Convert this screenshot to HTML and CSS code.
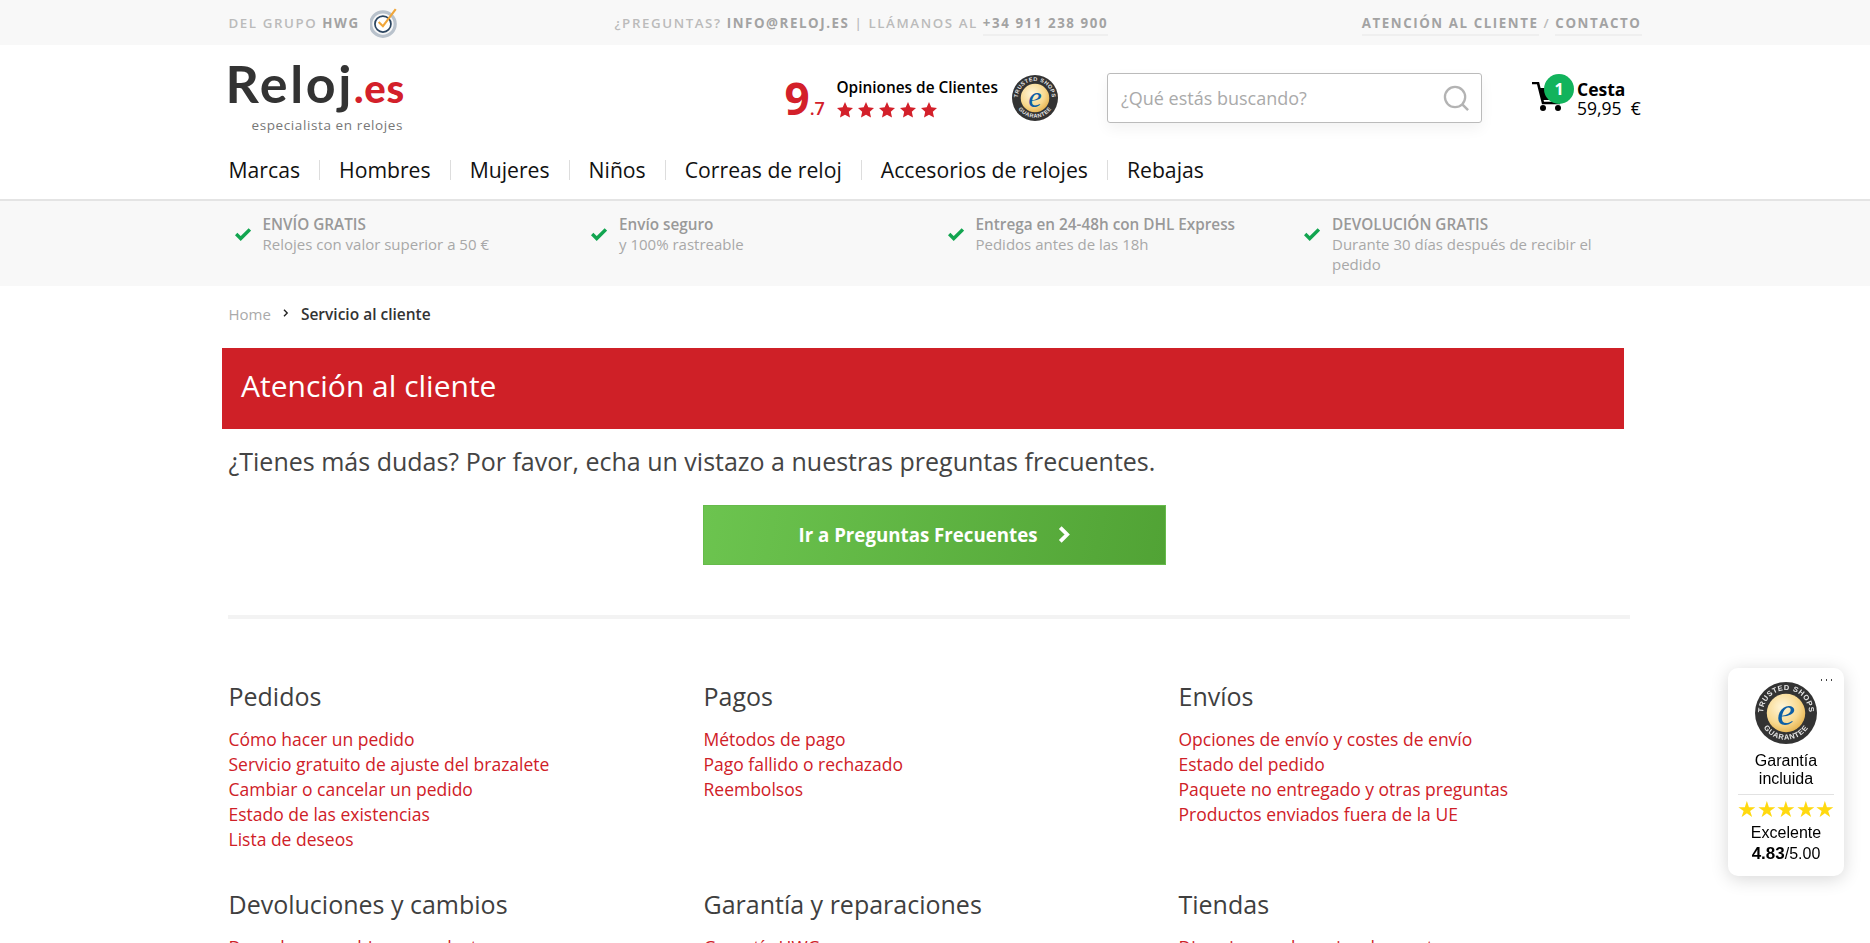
FILE: index.html
```html
<!DOCTYPE html>
<html lang="es">
<head>
  <meta charset="UTF-8" />
  <title>Atención al cliente - Reloj.es</title>
  <link rel="stylesheet" href="styles.css">
</head>
<body>
  <div class="topbar">
    <div class="wrap topbar-in">
      <div class="top-left">
        <span>Del grupo <b>HWG</b></span>
        <svg class="hwg-logo" viewBox="0 0 26 30" width="28" height="32">
          <circle cx="12" cy="16" r="11.5" fill="none" stroke="#b9c2cc" stroke-width="3"/>
          <circle cx="12" cy="16" r="7.5" fill="#fff" stroke="#2b4560" stroke-width="1.6"/>
          <path d="M8 14l4 4 12-16" fill="none" stroke="#f0a63a" stroke-width="2"/>
        </svg>
      </div>
      <div class="top-mid">¿Preguntas? <b>info@reloj.es</b> | Llámanos al <a href="#">+34 911 238 900</a></div>
      <div class="top-right"><a href="#">Atención al cliente</a> / <a href="#">Contacto</a></div>
    </div>
  </div>

  <header class="site-head">
    <div class="wrap">
      <div class="head-row">
        <a class="logo" href="#">
          <span class="logo-name">Reloj<em>.es</em></span>
          <span class="logo-sub">especialista en relojes</span>
        </a>
        <div class="rating">
          <div class="score">9<small>.7</small></div>
          <div class="rating-txt">
            <div class="rating-title">Opiniones de Clientes</div>
            <svg class="stars-red" viewBox="0 0 100 16" width="100" height="16">
              <polygon fill="#d3202a" points="8,0 10.3,5.3 16,5.9 11.8,9.8 13,15.6 8,12.7 3,15.6 4.2,9.8 0,5.9 5.7,5.3"/>
              <polygon fill="#d3202a" transform="translate(21)" points="8,0 10.3,5.3 16,5.9 11.8,9.8 13,15.6 8,12.7 3,15.6 4.2,9.8 0,5.9 5.7,5.3"/>
              <polygon fill="#d3202a" transform="translate(42)" points="8,0 10.3,5.3 16,5.9 11.8,9.8 13,15.6 8,12.7 3,15.6 4.2,9.8 0,5.9 5.7,5.3"/>
              <polygon fill="#d3202a" transform="translate(63)" points="8,0 10.3,5.3 16,5.9 11.8,9.8 13,15.6 8,12.7 3,15.6 4.2,9.8 0,5.9 5.7,5.3"/>
              <polygon fill="#d3202a" transform="translate(84)" points="8,0 10.3,5.3 16,5.9 11.8,9.8 13,15.6 8,12.7 3,15.6 4.2,9.8 0,5.9 5.7,5.3"/>
            </svg>
          </div>
          <svg class="ts-badge" viewBox="0 0 100 100" width="46" height="46">
            <defs>
              <radialGradient id="goldA" cx="0.4" cy="0.35" r="0.75">
                <stop offset="0" stop-color="#fff6da"/><stop offset="0.6" stop-color="#f8d88e"/><stop offset="1" stop-color="#e0a93f"/>
              </radialGradient>
              <path id="arcTopA" d="M13 50a37 37 0 0 1 74 0"/>
              <path id="arcBotA" d="M7 50a43 43 0 0 0 86 0"/>
            </defs>
            <circle cx="50" cy="50" r="50" fill="#333"/>
            <circle cx="50" cy="50" r="31" fill="url(#goldA)"/>
            <text class="ts-ring"><textPath href="#arcTopA" startOffset="50%" text-anchor="middle">TRUSTED SHOPS</textPath></text>
            <text class="ts-ring"><textPath href="#arcBotA" startOffset="50%" text-anchor="middle">GUARANTEE</textPath></text>
            <text x="50" y="70" class="ts-e">e</text>
          </svg>
        </div>
        <div class="search">
          <span class="search-ph">¿Qué estás buscando?</span>
          <svg viewBox="0 0 28 28" width="27" height="27">
            <circle cx="12.5" cy="12.5" r="10.5" fill="none" stroke="#b3b3b3" stroke-width="2.4"/>
            <path d="M20 20l6 6" stroke="#b3b3b3" stroke-width="2.6"/>
          </svg>
        </div>
        <a class="cart" href="#">
          <svg class="cart-icon" viewBox="0 0 32 30" width="32" height="30">
            <path d="M0 1h6l5 20h17" fill="none" stroke="#000" stroke-width="2.6"/>
            <path d="M7 6h24l-3 12H10z" fill="#000"/>
            <circle cx="11" cy="26" r="3" fill="#000"/>
            <circle cx="26" cy="26" r="3" fill="#000"/>
          </svg>
          <span class="cart-count">1</span>
          <span class="cart-txt"><b>Cesta</b>59,95&nbsp; €</span>
        </a>
      </div>
      <nav class="main-nav">
        <a href="#">Marcas</a>
        <a href="#">Hombres</a>
        <a href="#">Mujeres</a>
        <a href="#">Niños</a>
        <a href="#">Correas de reloj</a>
        <a href="#">Accesorios de relojes</a>
        <a href="#">Rebajas</a>
      </nav>
    </div>
  </header>

  <div class="usp">
    <div class="wrap usp-grid">
      <div class="usp-item">
        <svg class="tick" viewBox="0 0 14 12" width="16" height="14"><path d="M1 6l4 4 8-8" fill="none" stroke="#12a550" stroke-width="3"/></svg>
        <p><b>ENVÍO GRATIS</b><br>Relojes con valor superior a 50 €</p>
      </div>
      <div class="usp-item">
        <svg class="tick" viewBox="0 0 14 12" width="16" height="14"><path d="M1 6l4 4 8-8" fill="none" stroke="#12a550" stroke-width="3"/></svg>
        <p><b>Envío seguro</b><br>y 100% rastreable</p>
      </div>
      <div class="usp-item">
        <svg class="tick" viewBox="0 0 14 12" width="16" height="14"><path d="M1 6l4 4 8-8" fill="none" stroke="#12a550" stroke-width="3"/></svg>
        <p><b>Entrega en 24-48h con DHL Express</b><br>Pedidos antes de las 18h</p>
      </div>
      <div class="usp-item">
        <svg class="tick" viewBox="0 0 14 12" width="16" height="14"><path d="M1 6l4 4 8-8" fill="none" stroke="#12a550" stroke-width="3"/></svg>
        <p><b>DEVOLUCIÓN GRATIS</b><br>Durante 30 días después de recibir el pedido</p>
      </div>
    </div>
  </div>

  <main class="wrap">
    <div class="crumbs">
      <a href="#">Home</a>
      <svg class="crumb-sep" viewBox="0 0 6 8" width="6" height="8"><path d="M1 .8L4.2 4 1 7.2" fill="none" stroke="#222" stroke-width="1.4"/></svg>
      <b>Servicio al cliente</b>
    </div>
    <h1 class="banner">Atención al cliente</h1>
    <p class="intro">¿Tienes más dudas? Por favor, echa un vistazo a nuestras preguntas frecuentes.</p>
    <div class="cta-row">
      <a class="cta" href="#"><span>Ir a Preguntas Frecuentes</span>
        <svg viewBox="0 0 12 16" width="13" height="17"><path d="M2 1.5l6.5 6.5L2 14.5" fill="none" stroke="#fff" stroke-width="3.6"/></svg>
      </a>
    </div>
    <hr class="divider">

    <div class="help-grid">
      <section>
        <h2>Pedidos</h2>
        <a href="#">Cómo hacer un pedido</a>
        <a href="#">Servicio gratuito de ajuste del brazalete</a>
        <a href="#">Cambiar o cancelar un pedido</a>
        <a href="#">Estado de las existencias</a>
        <a href="#">Lista de deseos</a>
      </section>
      <section>
        <h2>Pagos</h2>
        <a href="#">Métodos de pago</a>
        <a href="#">Pago fallido o rechazado</a>
        <a href="#">Reembolsos</a>
      </section>
      <section>
        <h2>Envíos</h2>
        <a href="#">Opciones de envío y costes de envío</a>
        <a href="#">Estado del pedido</a>
        <a href="#">Paquete no entregado y otras preguntas</a>
        <a href="#">Productos enviados fuera de la UE</a>
      </section>
      <section>
        <h2>Devoluciones y cambios</h2>
        <a href="#">Devuelve o cambia un producto</a>
      </section>
      <section>
        <h2>Garantía y reparaciones</h2>
        <a href="#">Garantía HWG</a>
      </section>
      <section>
        <h2>Tiendas</h2>
        <a href="#">Direcciones y horarios de apertura</a>
      </section>
    </div>
  </main>

  <aside class="ts-widget">
    <span class="ts-more"></span>
    <svg class="ts-seal" viewBox="0 0 100 100" width="62" height="62">
      <defs>
        <radialGradient id="goldB" cx="0.4" cy="0.35" r="0.75">
          <stop offset="0" stop-color="#fff6da"/><stop offset="0.6" stop-color="#f8d88e"/><stop offset="1" stop-color="#e0a93f"/>
        </radialGradient>
        <path id="arcTop" d="M13 50a37 37 0 0 1 74 0"/>
        <path id="arcBot" d="M7 50a43 43 0 0 0 86 0"/>
      </defs>
      <circle cx="50" cy="50" r="50" fill="#333"/>
      <circle cx="50" cy="50" r="31" fill="url(#goldB)"/>
      <text class="ts-ring"><textPath href="#arcTop" startOffset="50%" text-anchor="middle">TRUSTED SHOPS</textPath></text>
      <text class="ts-ring"><textPath href="#arcBot" startOffset="50%" text-anchor="middle">GUARANTEE</textPath></text>
      <text x="50" y="70" class="ts-e">e</text>
    </svg>
    <div class="ts-label">Garantía<br>incluida</div>
    <div class="ts-stars">★★★★★</div>
    <div class="ts-grade">Excelente</div>
    <div class="ts-score"><b>4.83</b>/5.00</div>
  </aside>
</body>
</html>
```

FILE: styles.css
```css
* { box-sizing: border-box; }
html, body { height: 943px; overflow: hidden; }
body {
  margin: 0;
  font-family: "Open Sans", sans-serif;
  color: #3b3b3b;
  background: #fff;
}
a { text-decoration: none; color: inherit; }
.wrap {
  width: 1413px;
  margin-left: 228.5px;
}

/* barra superior */
.topbar {
  height: 45px;
  background: #f8f8f8;
  font-size: 13.3px;
  font-weight: 600;
  letter-spacing: 1.58px;
  text-transform: uppercase;
  color: #bbb;
}
.topbar b { color: #a3a3a3; font-weight: 700; }
.topbar-in {
  display: flex;
  align-items: center;
  height: 45px;
}
.top-left {
  display: flex;
  align-items: center;
  gap: 10px;
  width: 386px;
}
.top-mid a, .top-right a {
  color: #a3a3a3;
  font-weight: 700;
  padding-bottom: 2px;
  border-bottom: 2px solid #efefef;
}
.top-right { margin-left: auto; }

/* cabecera */
.site-head {
  height: 156px;
  border-bottom: 2px solid #e4e4e4;
}
.head-row {
  display: flex;
  height: 111px;
}
.logo {
  display: block;
  width: 556px;
  padding-top: 10px;
}
.logo-name {
  display: block;
  margin-left: -3px;
  font-family: "Lato", sans-serif;
  font-weight: 700;
  font-size: 52px;
  line-height: 56px;
  letter-spacing: 2.6px;
  color: #333;
}
.logo-name em {
  font-style: normal;
  font-weight: 900;
  font-size: 40px;
  letter-spacing: 0.8px;
  color: #d3202a;
}
.logo-sub {
  display: block;
  margin: 0 0 0 23px;
  font-size: 13.5px;
  letter-spacing: 0.6px;
  color: #777;
}
.rating {
  display: flex;
  width: 322.5px;
  padding-top: 30px;
}
.score {
  width: 52px;
  font-size: 44px;
  line-height: 46px;
  font-weight: 700;
  color: #d3202a;
}
.score small { font-size: 18px; font-weight: 600; }
.rating-txt { width: 175px; }
.rating-title {
  margin-top: 3px;
  font-size: 15.4px;
  font-weight: 600;
  line-height: 20px;
  color: #000;
}
.stars-red { display: block; margin-top: 4px; }
.ts-e {
  font-family: "Liberation Serif", serif;
  font-style: italic;
  font-size: 66px;
  fill: #0d5fa6;
  text-anchor: middle;
}
.search {
  display: flex;
  align-items: center;
  justify-content: space-between;
  width: 375px;
  height: 50px;
  margin-top: 28px;
  padding: 0 11px 0 13px;
  border: 1px solid #bbb;
  border-radius: 3px;
  box-shadow: 0 6px 14px rgba(0, 0, 0, 0.05);
}
.search-ph { font-size: 18px; color: #aaa; }
.cart {
  position: relative;
  display: flex;
  margin-left: 50px;
  padding-top: 35px;
  height: 90px;
}
.cart-icon { margin: 2px 13px 0 0; }
.cart-count {
  position: absolute;
  top: 29px;
  left: 12px;
  width: 30px;
  height: 30px;
  border-radius: 50%;
  background: #12b35c;
  color: #fff;
  font-size: 16px;
  font-weight: 700;
  line-height: 30px;
  text-align: center;
}
.cart-txt {
  font-size: 17.5px;
  line-height: 19px;
  color: #000;
  white-space: nowrap;
}
.cart-txt b { display: block; font-weight: 700; }
.main-nav {
  display: flex;
  align-items: center;
  height: 24px;
  margin-top: 2px;
  font-size: 21.2px;
  color: #111;
}
.main-nav a {
  padding: 0 19px;
  line-height: 20px;
  border-left: 1px solid #ddd;
}
.main-nav a:first-child { padding-left: 0; border-left: 0; }

/* ventajas */
.usp {
  height: 85px;
  background: #f8f8f8;
}
.usp-grid {
  display: grid;
  grid-template-columns: repeat(4, 356.5px);
  padding-top: 13px;
}
.usp-item {
  display: flex;
  gap: 12px;
  padding-left: 6px;
  padding-right: 30px;
}
.usp-item .tick { flex: none; margin-top: 13px; }
.usp-item p {
  margin: 0;
  font-size: 15px;
  line-height: 20px;
  color: #a8a8a8;
}
.usp-item b { font-size: 15.3px; line-height: 19px; font-weight: 600; color: #999; }

/* contenido */
.crumbs {
  display: flex;
  align-items: center;
  height: 62px;
  padding-bottom: 7px;
  font-size: 15px;
  color: #aaa;
}
.crumb-sep { margin: 0 12px 2px 12px; }
.crumbs b { font-size: 15.5px; font-weight: 600; color: #333; }
.banner {
  width: 1402px;
  height: 81px;
  margin: 0 0 0 -6.5px;
  padding: 0 19px;
  background: #cf2027;
  color: #fff;
  font-size: 30px;
  font-weight: 400;
  line-height: 76px;
}
.intro {
  margin: 0;
  padding-top: 15px;
  height: 76px;
  font-size: 25px;
  line-height: 34px;
  color: #444;
}
.cta-row { padding-left: 474.5px; }
.cta {
  display: flex;
  align-items: center;
  justify-content: center;
  gap: 20px;
  width: 463px;
  height: 60px;
  padding-bottom: 2px;
  background: linear-gradient(100deg, #6cc44f, #51a335);
  border: 1px solid #66bb4b;
  color: #fff;
  font-size: 18.7px;
  font-weight: 700;
}
.divider {
  width: 1402px;
  height: 4px;
  margin: 50px 0 0 -0.5px;
  border: 0;
  background: #f3f3f3;
}
.help-grid {
  display: grid;
  grid-template-columns: repeat(3, 475px);
  padding-top: 59px;
}
.help-grid section { height: 208px; }
.help-grid h2 {
  margin: 0 0 13px;
  font-size: 25px;
  font-weight: 400;
  line-height: 36px;
  color: #3f3f3f;
}
.help-grid a {
  display: block;
  font-size: 17.5px;
  line-height: 25px;
  color: #cf2027;
}

/* sello */
.ts-widget {
  position: fixed;
  top: 668px;
  left: 1728px;
  width: 116px;
  height: 208px;
  padding-top: 14px;
  border-radius: 10px;
  background: #fff;
  box-shadow: 0 3px 18px rgba(0, 0, 0, 0.16);
  font-family: "Liberation Sans", sans-serif;
  font-size: 16px;
  line-height: 18px;
  text-align: center;
  color: #000;
}
.ts-more {
  position: absolute;
  top: 11px;
  right: 10px;
  width: 15px;
  height: 2px;
  background: radial-gradient(circle, #444 0.9px, transparent 1.1px) 0 0 / 5px 2px;
}
.ts-seal { display: block; margin: 0 auto; }
.ts-ring {
  font-family: "Liberation Sans", sans-serif;
  font-size: 12px;
  font-weight: 700;
  letter-spacing: 1px;
  fill: #e6e6e6;
}
.ts-label {
  margin: 8px 10px 0;
  padding-bottom: 6px;
  border-bottom: 1px solid #e2e2e2;
}
.ts-stars {
  margin-top: 5px;
  font-size: 22px;
  line-height: 20px;
  letter-spacing: -0.4px;
  color: #ffd90f;
}
.ts-grade { margin-top: 4px; }
.ts-score { margin-top: 3px; }
.ts-score b { font-size: 17px; }
```
